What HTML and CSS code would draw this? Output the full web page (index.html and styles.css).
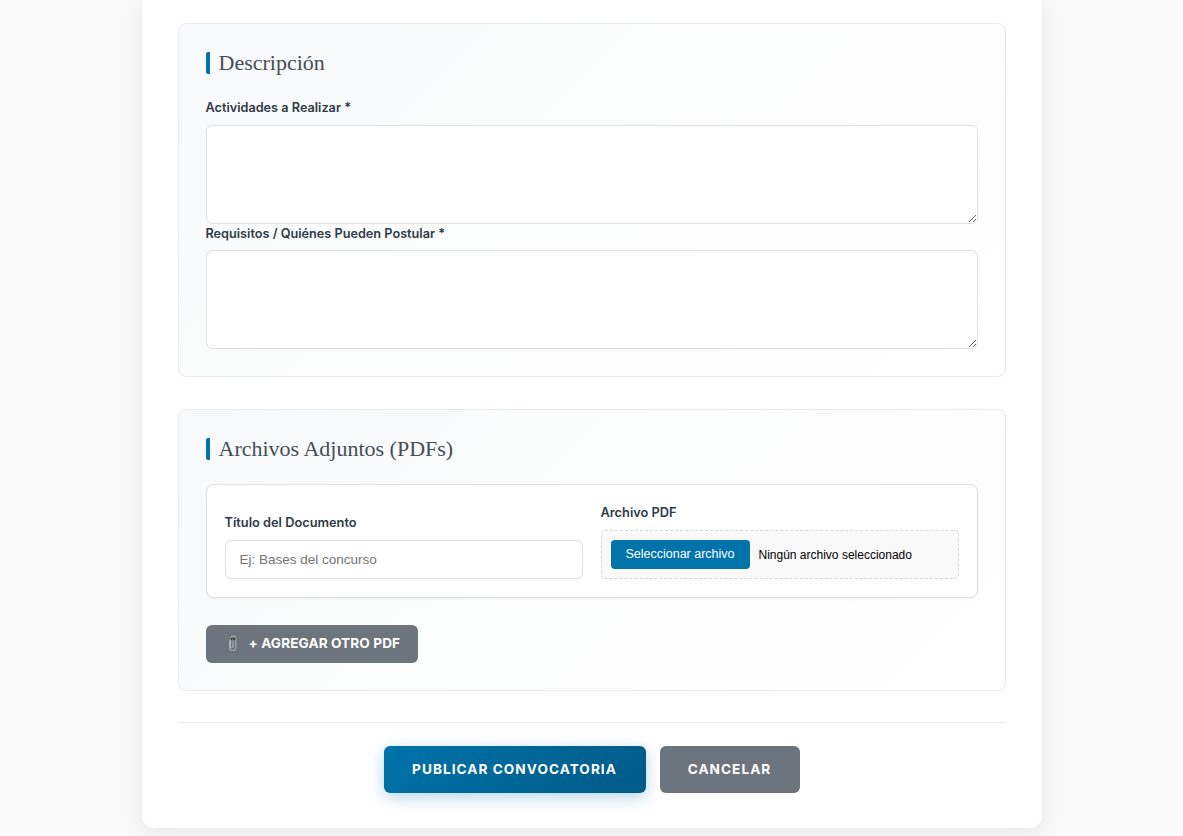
FILE: index.html
```html
<!DOCTYPE html>
<html lang="es">
<head>
<meta charset="utf-8">
<title>Publicar convocatoria</title>
<link rel="stylesheet" href="styles.css">
</head>
<body>
<main class="card">
  <form class="form">
    <section class="section section-desc">
      <h2 class="section-title">Descripción</h2>
      <label class="label" for="act">Actividades a Realizar *</label>
      <textarea class="textarea" id="act"></textarea>
      <label class="label label-next" for="req">Requisitos / Quiénes Pueden Postular *</label>
      <textarea class="textarea" id="req"></textarea>
    </section>
    <section class="section section-files">
      <h2 class="section-title">Archivos Adjuntos (PDFs)</h2>
      <div class="attachment">
        <div class="field">
          <label class="label label-tight" for="doc">Título del Documento</label>
          <input class="input" id="doc" type="text" placeholder="Ej: Bases del concurso">
        </div>
        <div class="field">
          <span class="label label-tight">Archivo PDF</span>
          <div class="file-box">
            <button class="file-btn" type="button">Seleccionar archivo</button>
            <span class="file-name">Ningún archivo seleccionado</span>
          </div>
        </div>
      </div>
      <button class="btn btn-add" type="button">
        <svg class="clip" viewBox="0 0 12 18" width="12" height="18" aria-hidden="true">
          <path d="M2.6 6v7.4a3.1 3.1 0 0 0 6.2 0V4.6a2.6 2.6 0 0 0-5.2 0v8.2a1.2 1.2 0 0 0 2.4 0V6.5" fill="none" stroke="#a8adb3" stroke-width="1.1"/>
          <circle cx="4.5" cy="4.8" r="1.1" fill="#33383d"/>
          <circle cx="7.3" cy="4.8" r="1.1" fill="#33383d"/>
        </svg>
        <span>+ AGREGAR OTRO PDF</span>
      </button>
    </section>
    <div class="actions">
      <button class="btn btn-primary" type="button">PUBLICAR CONVOCATORIA</button>
      <button class="btn btn-cancel" type="button">CANCELAR</button>
    </div>
  </form>
</main>
</body>
</html>
```
FILE: styles.css
```css
* { box-sizing: border-box; }
html, body { margin: 0; padding: 0; }
body {
  background: #f9f9f9;
  font-family: "Inter", "Liberation Sans", sans-serif;
  color: #2b3440;
  height: 836px;
  overflow: hidden;
}
.card {
  width: 900px;
  height: 828px;
  margin: 0 auto;
  padding: 23px 36px 0;
  background: #fff;
  border-radius: 0 0 12px 12px;
  box-shadow: 0 4px 20px rgba(0, 0, 0, 0.08);
}
.section {
  border: 1px solid #eaeaea;
  border-radius: 8px;
  padding: 28px 27px 27px;
  background: linear-gradient(135deg, #f8f9fa 0%, #ffffff 100%);
}
.section-desc { height: 354px; margin-bottom: 32px; }
.section-files { height: 282px; }
.section-title {
  margin: 0 0 24px;
  height: 22px;
  border-left: 4px solid #0073aa;
  border-radius: 2px;
  padding-left: 9px;
  font-family: "Liberation Serif", serif;
  font-weight: 400;
  font-size: 22px;
  line-height: 22px;
  color: #454d56;
}
.section-desc .section-title { margin-bottom: 26px; }
.label {
  display: block;
  font-size: 12.7px;
  font-weight: 600;
  line-height: 16px;
  color: #2f3a48;
  margin-bottom: 9px;
}
.label-next { margin-top: 2px; margin-bottom: 8px; }
.label-tight { font-size: 12.8px; }
.textarea {
  display: block;
  width: 100%;
  height: 99px;
  background: #fff;
  border: 1px solid #e0e0e0;
  border-radius: 6px;
  resize: vertical;
  outline: none;
}
.attachment {
  display: grid;
  grid-template-columns: 1fr 1fr;
  gap: 18px;
  align-items: end;
  height: 114px;
  padding: 18px;
  background: #fff;
  border: 1px solid #e0e0e0;
  border-radius: 8px;
  box-shadow: 0 1px 3px rgba(0, 0, 0, 0.05);
}
.input {
  display: block;
  width: 100%;
  height: 39px;
  padding: 0 14px;
  border: 1px solid #e0e0e0;
  border-radius: 6px;
  background: #fff;
  font-family: "Liberation Sans", sans-serif;
  font-size: 13.5px;
  outline: none;
}
.input::placeholder { color: #757575; }
.file-box {
  display: flex;
  align-items: center;
  gap: 9px;
  height: 49px;
  padding: 0 9px;
  background: #f9f9f9;
  border: 1px dashed #d8d8d8;
  border-radius: 4px;
}
.file-btn {
  width: 139px;
  height: 29px;
  padding: 0 0 2px;
  border: 0;
  border-radius: 4px;
  background: #0073aa;
  color: #fff;
  font-family: "Liberation Sans", sans-serif;
  font-size: 12.5px;
}
.file-name {
  font-family: "Liberation Sans", sans-serif;
  font-size: 12px;
  color: #000;
}
.btn {
  border: 0;
  border-radius: 6px;
  color: #fff;
  font-family: "Inter", "Liberation Sans", sans-serif;
  font-weight: 700;
  padding: 0 0 2px;
}
.btn-add {
  display: flex;
  align-items: center;
  gap: 10px;
  width: 212px;
  height: 38px;
  margin-top: 27px;
  padding-left: 21px;
  background: #6c757d;
  font-size: 13.6px;
  letter-spacing: 0.1px;
}
.actions {
  display: flex;
  justify-content: center;
  gap: 14px;
  margin-top: 31px;
  padding-top: 23px;
  border-top: 1px solid #eaeaea;
}
.btn-primary, .btn-cancel {
  height: 47px;
  font-size: 13.6px;
  letter-spacing: 1.05px;
}
.btn-primary {
  width: 262px;
  background: linear-gradient(135deg, #0073aa 0%, #005a87 100%);
  box-shadow: 0 4px 15px rgba(0, 115, 170, 0.3);
}
.btn-cancel {
  width: 140px;
  background: #6c757d;
}
```
